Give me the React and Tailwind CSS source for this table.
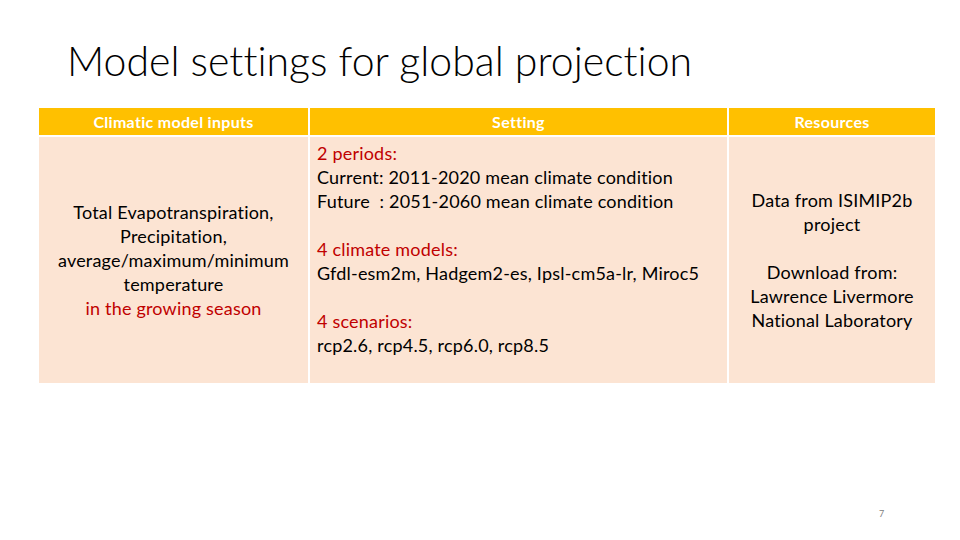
export default function App() {
  const red = "text-[#c00000]";
  return (
    <div className="w-[960px] h-[540px] bg-white relative overflow-hidden font-['Lato',sans-serif] text-black [font-variant-ligatures:none]">
      <div className="pl-[67px] pt-[35px] h-[108px]">
        <h1 className="text-[41px] font-light leading-[52px]">Model settings for global projection</h1>
      </div>
      <div className="ml-[39px] w-[896px] grid grid-cols-[269px_417px_206px] gap-[2px] text-[18px] leading-[24px] tracking-[0.2px]">
        <div className="bg-[#ffc000] h-[27px] flex items-center justify-center text-white font-bold text-[16px] tracking-[0.3px]">Climatic model inputs</div>
        <div className="bg-[#ffc000] h-[27px] flex items-center justify-center text-white font-bold text-[16px] tracking-[0.3px]">Setting</div>
        <div className="bg-[#ffc000] h-[27px] flex items-center justify-center text-white font-bold text-[16px] tracking-[0.3px]">Resources</div>

        <div className="bg-[#fce4d3] h-[246px] flex flex-col items-center justify-center text-center">
          <div>Total Evapotranspiration,</div>
          <div>Precipitation,</div>
          <div>average/maximum/minimum</div>
          <div>temperature</div>
          <div className={red}>in the growing season</div>
        </div>
        <div className="bg-[#fce4d3] h-[246px] pl-[7px] pt-[4px]">
          <div className={red}>2 periods:</div>
          <div>Current: 2011-2020 mean climate condition</div>
          <div className="whitespace-pre">Future  : 2051-2060 mean climate condition</div>
          <div className="h-[24px]"></div>
          <div className={red}>4 climate models:</div>
          <div>Gfdl-esm2m, Hadgem2-es, Ipsl-cm5a-lr, Miroc5</div>
          <div className="h-[24px]"></div>
          <div className={red}>4 scenarios:</div>
          <div>rcp2.6, rcp4.5, rcp6.0, rcp8.5</div>
        </div>
        <div className="bg-[#fce4d3] h-[246px] flex flex-col items-center justify-center text-center">
          <div>Data from ISIMIP2b</div>
          <div>project</div>
          <div className="h-[24px]"></div>
          <div>Download from:</div>
          <div>Lawrence Livermore</div>
          <div>National Laboratory</div>
        </div>
      </div>
      <div className="absolute left-[879px] top-[507px] text-[9px] text-[#808080]">7</div>
    </div>
  );
}
